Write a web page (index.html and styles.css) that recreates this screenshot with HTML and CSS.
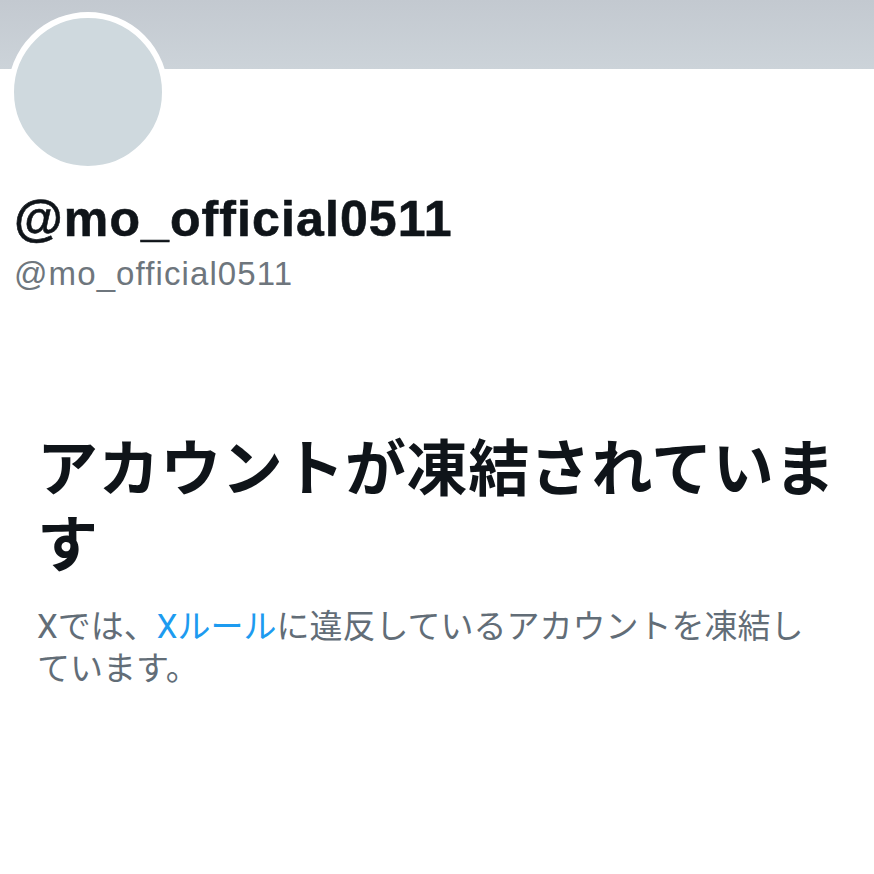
FILE: index.html
```html
<!DOCTYPE html>
<html lang="ja">
<head>
<meta charset="utf-8">
<title>@mo_official0511</title>
<link rel="stylesheet" href="styles.css">
</head>
<body>
<div class="page">
  <div class="banner"></div>
  <div class="profile">
    <div class="avatar"></div>
    <h1 class="name">@mo_official0511</h1>
    <div class="handle">@mo_official0511</div>
  </div>
  <div class="notice">
    <h2 class="notice-title">アカウントが凍結されています</h2>
    <p class="notice-text">Xでは、<a class="link">Xルール</a>に違反しているアカウントを凍結しています。</p>
  </div>
</div>
</body>
</html>
```

FILE: styles.css
```css
html, body {
  margin: 0;
  padding: 0;
  background: #ffffff;
}

.page {
  width: 874px;
  min-height: 874px;
  background: #ffffff;
}

.banner {
  height: 69px;
  background: linear-gradient(180deg, #c3c9d0 0%, #ccd3d9 100%);
}

.profile {
  padding-left: 14px;
}

.avatar {
  width: 148px;
  height: 148px;
  margin-top: -57px;
  margin-left: -6px;
  border: 6px solid #ffffff;
  border-radius: 50%;
  background: #cfd9de;
}

.name {
  margin: 17px 0 0 0;
  font-family: "Liberation Sans", Arial, sans-serif;
  font-weight: 700;
  font-size: 50px;
  line-height: 60px;
  letter-spacing: 1.1px;
  -webkit-text-stroke: 0.6px #0f1419;
  color: #0f1419;
}

.handle {
  margin-top: 5px;
  font-family: "Liberation Sans", Arial, sans-serif;
  font-size: 33px;
  line-height: 40px;
  letter-spacing: 1.1px;
  color: #6e767d;
}

.notice {
  padding: 133px 28px 0 37px;
}

.notice-title {
  margin: 0;
  font-family: "Noto Sans CJK JP", sans-serif;
  font-weight: 700;
  font-size: 61px;
  line-height: 76px;
  letter-spacing: 0.6px;
  color: #0f1419;
}

.notice-text {
  margin: 27px 0 0 0;
  max-width: 785px;
  font-family: Roboto, "Noto Sans CJK JP", sans-serif;
  font-weight: 400;
  font-size: 33px;
  line-height: 42px;
  color: #626d77;
}

.link {
  color: #1d9bf0;
  text-decoration: none;
}
```
